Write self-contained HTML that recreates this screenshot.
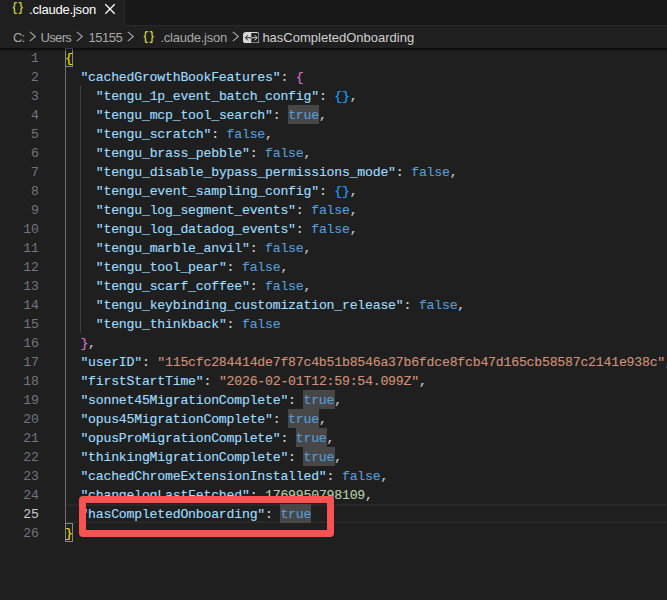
<!DOCTYPE html>
<html><head><meta charset="utf-8"><title>.claude.json</title>
<style>
html,body{margin:0;padding:0;background:#1f1f1f;}
body{width:667px;height:600px;position:relative;overflow:hidden;font-family:"Liberation Sans",sans-serif;}
#tabs{position:absolute;left:0;top:0;width:667px;height:26px;background:#181818;border-bottom:1px solid #2b2b2b;box-sizing:border-box;}
#tab{position:absolute;left:0;top:0;width:125px;height:26px;background:#1f1f1f;border-right:1px solid #2b2b2b;box-sizing:border-box;}
#tab .lbl{position:absolute;left:29px;top:1px;font-size:13px;line-height:18px;letter-spacing:-0.2px;color:#ffffff;white-space:nowrap;}
.jic i{display:inline-block;font-style:normal;transform:scaleX(0.78);}
.jic{position:absolute;font-family:"Liberation Mono",monospace;font-weight:bold;color:#cbcb41;white-space:nowrap;}
#bc{position:absolute;left:0;top:26px;width:667px;height:22px;background:#1f1f1f;color:#a9a9a9;font-size:13px;line-height:22px;white-space:nowrap;}
#bc span{position:absolute;top:0.5px;}
#shadow{position:absolute;left:0;top:48px;width:667px;height:4px;background:linear-gradient(#000000aa,#00000000);}
.ln{position:absolute;left:0;width:38.7px;text-align:right;height:19px;line-height:21px;font-family:"Liberation Mono",monospace;font-size:13.2px;letter-spacing:-0.2213px;color:#6e7681;}
.ln.act{color:#cccccc;}
.cl{-webkit-text-stroke:0.15px;position:absolute;height:19px;line-height:21px;font-family:"Liberation Mono",monospace;font-size:13.2px;letter-spacing:-0.2213px;white-space:pre;color:#cccccc;}
.k{color:#9cdcfe}.s{color:#ce9178}.t{color:#569cd6}.n{color:#b5cea8}.p{color:#cccccc}
.b1{color:#ffd700}.b2{color:#da70d6}.b3{color:#179fff}
.hl,.hl2{background:#474747;display:inline-block;height:19px;vertical-align:top;padding-right:0.3px;margin-right:-0.3px;}
.guide{position:absolute;width:1px;background:#404040;}
.curline{position:absolute;left:66px;width:601px;top:504px;height:19px;box-sizing:border-box;border-top:2px solid #282828;border-bottom:2px solid #282828;}
.bm{position:absolute;width:8px;height:19px;box-sizing:border-box;border:1px solid #888888;background:rgba(0,100,0,0.1);}
#red{position:absolute;left:79px;top:495.6px;width:255.2px;height:41.7px;box-sizing:border-box;border:7px solid #f85252;border-radius:4px;}
</style></head><body>
<div id="tabs"><div id="tab"><span class="jic" style="left:10.5px;top:0px;font-size:12.5px;line-height:16px;"><i>{</i><i style="margin-left:-0.6px">}</i></span><span class="lbl">.claude.json</span>
<svg style="position:absolute;left:103px;top:1.7px" width="14" height="14" viewBox="0 0 14 14"><path d="M2.3 2.3 L11.7 11.7 M11.7 2.3 L2.3 11.7" stroke="#ffffff" stroke-width="1.3" fill="none"/></svg></div></div>
<div id="bc">
<span style="left:13px;letter-spacing:-1px">C:</span>
<svg style="position:absolute;left:28.5px;top:5.4px" width="8" height="11" viewBox="0 0 8 11"><path d="M0.8 0.8 L6.3 5.5 L0.8 10.2" stroke="#a9a9a9" stroke-width="1.1" fill="none"/></svg>
<span style="left:40.5px;letter-spacing:-0.65px">Users</span>
<svg style="position:absolute;left:75.5px;top:5.4px" width="8" height="11" viewBox="0 0 8 11"><path d="M0.8 0.8 L6.3 5.5 L0.8 10.2" stroke="#a9a9a9" stroke-width="1.1" fill="none"/></svg>
<span style="left:88.5px;letter-spacing:-0.5px">15155</span>
<svg style="position:absolute;left:126.5px;top:5.4px" width="8" height="11" viewBox="0 0 8 11"><path d="M0.8 0.8 L6.3 5.5 L0.8 10.2" stroke="#a9a9a9" stroke-width="1.1" fill="none"/></svg>
<span class="jic" style="left:141.5px;top:1.1px;font-size:12.5px;line-height:21px;"><i>{</i><i style="margin-left:-0.6px">}</i></span>
<span style="left:160.5px;letter-spacing:-0.25px">.claude.json</span>
<svg style="position:absolute;left:231.5px;top:5.4px" width="8" height="11" viewBox="0 0 8 11"><path d="M0.8 0.8 L6.3 5.5 L0.8 10.2" stroke="#a9a9a9" stroke-width="1.1" fill="none"/></svg>
<svg style="position:absolute;left:242.7px;top:5.6px" width="16.5" height="11.5" viewBox="0 0 16.5 11.5"><rect x="0.5" y="0.5" width="15.5" height="10.5" rx="2" fill="none" stroke="#d8d8d8" stroke-width="1"/><path d="M0.5 2.5 Q0.5 0.5 2.5 0.5 H8.3 V11 H2.5 Q0.5 11 0.5 9 Z" fill="#d8d8d8"/><path d="M8.3 5.75 H2.6 M5 3.1 L2.4 5.75 L5 8.4" stroke="#1f1f1f" stroke-width="1" fill="none"/><path d="M8.3 5.75 H14 M11.6 3.1 L14.2 5.75 L11.6 8.4" stroke="#d8d8d8" stroke-width="1" fill="none"/></svg>
<span style="left:262.4px;color:#d0d0d0">hasCompletedOnboarding</span>
</div>
<div class="guide" style="left:65px;top:67px;height:456px;background:#707070"></div>
<div class="guide" style="left:80px;top:86px;height:247px"></div>
<div class="curline"></div>
<div class="bm" style="left:65px;top:48px"></div>
<div class="bm" style="left:65px;top:523px"></div>
<div class="ln" style="top:48px">1</div>
<div class="cl" style="top:48px;left:65.0px"><span class="b1">{</span></div>
<div class="ln" style="top:67px">2</div>
<div class="cl" style="top:67px;left:80.4px"><span class="k">"cachedGrowthBookFeatures"</span><span class="p">: </span><span class="b2">{</span></div>
<div class="ln" style="top:86px">3</div>
<div class="cl" style="top:86px;left:95.8px"><span class="k">"tengu_1p_event_batch_config"</span><span class="p">: </span><span class="b3">{}</span><span class="p">,</span></div>
<div class="ln" style="top:105px">4</div>
<div class="cl" style="top:105px;left:95.8px"><span class="k">"tengu_mcp_tool_search"</span><span class="p">: </span><span class="t hl">true</span><span class="p">,</span></div>
<div class="ln" style="top:124px">5</div>
<div class="cl" style="top:124px;left:95.8px"><span class="k">"tengu_scratch"</span><span class="p">: </span><span class="t">false</span><span class="p">,</span></div>
<div class="ln" style="top:143px">6</div>
<div class="cl" style="top:143px;left:95.8px"><span class="k">"tengu_brass_pebble"</span><span class="p">: </span><span class="t">false</span><span class="p">,</span></div>
<div class="ln" style="top:162px">7</div>
<div class="cl" style="top:162px;left:95.8px"><span class="k">"tengu_disable_bypass_permissions_mode"</span><span class="p">: </span><span class="t">false</span><span class="p">,</span></div>
<div class="ln" style="top:181px">8</div>
<div class="cl" style="top:181px;left:95.8px"><span class="k">"tengu_event_sampling_config"</span><span class="p">: </span><span class="b3">{}</span><span class="p">,</span></div>
<div class="ln" style="top:200px">9</div>
<div class="cl" style="top:200px;left:95.8px"><span class="k">"tengu_log_segment_events"</span><span class="p">: </span><span class="t">false</span><span class="p">,</span></div>
<div class="ln" style="top:219px">10</div>
<div class="cl" style="top:219px;left:95.8px"><span class="k">"tengu_log_datadog_events"</span><span class="p">: </span><span class="t">false</span><span class="p">,</span></div>
<div class="ln" style="top:238px">11</div>
<div class="cl" style="top:238px;left:95.8px"><span class="k">"tengu_marble_anvil"</span><span class="p">: </span><span class="t">false</span><span class="p">,</span></div>
<div class="ln" style="top:257px">12</div>
<div class="cl" style="top:257px;left:95.8px"><span class="k">"tengu_tool_pear"</span><span class="p">: </span><span class="t">false</span><span class="p">,</span></div>
<div class="ln" style="top:276px">13</div>
<div class="cl" style="top:276px;left:95.8px"><span class="k">"tengu_scarf_coffee"</span><span class="p">: </span><span class="t">false</span><span class="p">,</span></div>
<div class="ln" style="top:295px">14</div>
<div class="cl" style="top:295px;left:95.8px"><span class="k">"tengu_keybinding_customization_release"</span><span class="p">: </span><span class="t">false</span><span class="p">,</span></div>
<div class="ln" style="top:314px">15</div>
<div class="cl" style="top:314px;left:95.8px"><span class="k">"tengu_thinkback"</span><span class="p">: </span><span class="t">false</span></div>
<div class="ln" style="top:333px">16</div>
<div class="cl" style="top:333px;left:80.4px"><span class="b2">}</span><span class="p">,</span></div>
<div class="ln" style="top:352px">17</div>
<div class="cl" style="top:352px;left:80.4px"><span class="k">"userID"</span><span class="p">: </span><span class="s">"115cfc284414de7f87c4b51b8546a37b6fdce8fcb47d165cb58587c2141e938c"</span><span class="p">,</span></div>
<div class="ln" style="top:371px">18</div>
<div class="cl" style="top:371px;left:80.4px"><span class="k">"firstStartTime"</span><span class="p">: </span><span class="s">"2026-02-01T12:59:54.099Z"</span><span class="p">,</span></div>
<div class="ln" style="top:390px">19</div>
<div class="cl" style="top:390px;left:80.4px"><span class="k">"sonnet45MigrationComplete"</span><span class="p">: </span><span class="t hl">true</span><span class="p">,</span></div>
<div class="ln" style="top:409px">20</div>
<div class="cl" style="top:409px;left:80.4px"><span class="k">"opus45MigrationComplete"</span><span class="p">: </span><span class="t hl">true</span><span class="p">,</span></div>
<div class="ln" style="top:428px">21</div>
<div class="cl" style="top:428px;left:80.4px"><span class="k">"opusProMigrationComplete"</span><span class="p">: </span><span class="t hl">true</span><span class="p">,</span></div>
<div class="ln" style="top:447px">22</div>
<div class="cl" style="top:447px;left:80.4px"><span class="k">"thinkingMigrationComplete"</span><span class="p">: </span><span class="t hl">true</span><span class="p">,</span></div>
<div class="ln" style="top:466px">23</div>
<div class="cl" style="top:466px;left:80.4px"><span class="k">"cachedChromeExtensionInstalled"</span><span class="p">: </span><span class="t">false</span><span class="p">,</span></div>
<div class="ln" style="top:485px">24</div>
<div class="cl" style="top:485px;left:80.4px"><span class="k">"changelogLastFetched"</span><span class="p">: </span><span class="n">1769950798109</span><span class="p">,</span></div>
<div class="ln act" style="top:504px">25</div>
<div class="cl" style="top:504px;left:80.4px"><span class="k">"hasCompletedOnboarding"</span><span class="p">: </span><span class="t hl2">true</span></div>
<div class="ln" style="top:523px">26</div>
<div class="cl" style="top:523px;left:65.0px"><span class="b1">}</span></div>
<div id="shadow"></div>
<div id="red"></div>
</body></html>
